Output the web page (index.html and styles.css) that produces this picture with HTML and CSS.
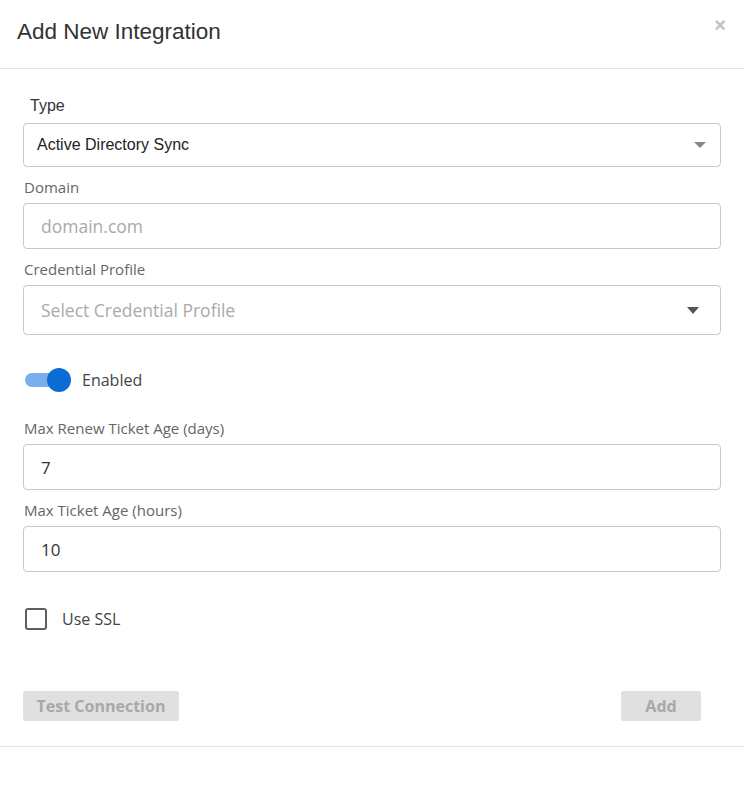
FILE: index.html
```html
<!DOCTYPE html>
<html>
<head>
<meta charset="utf-8">
<link rel="stylesheet" href="styles.css">
</head>
<body>
<div class="modal">
  <div class="modal-header">
    <h1 class="title">Add New Integration</h1>
    <span class="close">&times;</span>
  </div>
  <div class="modal-body">
    <div class="type-label">Type</div>
    <div class="select select-type">
      <span class="select-value">Active Directory Sync</span>
      <span class="caret caret-light"></span>
    </div>
    <div class="label">Domain</div>
    <div class="input input-domain"><span class="placeholder">domain.com</span></div>
    <div class="label">Credential Profile</div>
    <div class="select select-cred">
      <span class="placeholder">Select Credential Profile</span>
      <span class="caret caret-dark"></span>
    </div>
    <div class="toggle-row">
      <span class="toggle"><span class="track"></span><span class="knob"></span></span>
      <span class="toggle-label">Enabled</span>
    </div>
    <div class="label">Max Renew Ticket Age (days)</div>
    <div class="input"><span class="value">7</span></div>
    <div class="label">Max Ticket Age (hours)</div>
    <div class="input"><span class="value">10</span></div>
    <div class="check-row">
      <span class="checkbox"></span>
      <span class="check-label">Use SSL</span>
    </div>
    <div class="actions">
      <button class="btn btn-test">Test Connection</button>
      <button class="btn btn-add">Add</button>
    </div>
  </div>
</div>
</body>
</html>
```
FILE: styles.css
```css
* { box-sizing: border-box; }
html, body { margin: 0; padding: 0; background: #fff; }
body { font-family: "Open Sans", "Liberation Sans", sans-serif; color: #444; }
.modal { width: 744px; border-bottom: 1px solid #e5e5e5; }
.modal-header {
  height: 69px;
  border-bottom: 1px solid #e5e5e5;
  display: flex;
  align-items: flex-start;
  justify-content: space-between;
  padding: 0 18px 0 17px;
}
.title {
  margin: 18px 0 0 0;
  font-family: "Liberation Sans", Arial, sans-serif;
  font-weight: normal;
  font-size: 22.5px;
  line-height: 28px;
  color: #333;
}
.close {
  font-family: "Liberation Sans", Arial, sans-serif;
  font-size: 20px;
  line-height: 20px;
  margin-top: 15px;
  color: #c0c0c0;
  font-weight: bold;
}
.modal-body { padding: 27px 23px 25px 23px; }
.type-label {
  font-family: "Liberation Sans", Arial, sans-serif;
  font-size: 16px;
  line-height: 20px;
  color: #333;
  padding-left: 7px;
  margin-bottom: 7px;
}
.select, .input {
  width: 698px;
  border: 1px solid #c8c8c8;
  border-radius: 4px;
  display: flex;
  align-items: center;
  justify-content: space-between;
  background: #fff;
}
.select-type { height: 44px; padding: 0 14px 0 13px; }
.select-value {
  font-family: "Liberation Sans", Arial, sans-serif;
  font-size: 16px;
  color: #222;
}
.caret {
  width: 0; height: 0;
  border-left: 6px solid transparent;
  border-right: 6px solid transparent;
}
.caret-light { border-top: 6px solid #888; }
.caret-dark { border-top: 7px solid #555; margin-right: 7px; }
.label {
  font-size: 15px;
  line-height: 20px;
  color: #666;
  margin: 10px 0 6px 1px;
}
.input { height: 46px; padding: 0 17px; }
.placeholder { font-size: 17.5px; color: #aaa; }
.select-cred { height: 50px; padding: 0 14px 0 17px; }
.value { font-size: 17px; color: #333; }
.toggle-row {
  display: flex;
  align-items: center;
  margin: 33px 0 26px 2px;
  height: 24px;
}
.toggle { position: relative; width: 46px; height: 24px; display: inline-block; }
.track {
  position: absolute; left: 0; top: 5px;
  width: 38px; height: 14px; border-radius: 7px;
  background: #79afea;
}
.knob {
  position: absolute; left: 22px; top: 0;
  width: 24px; height: 24px; border-radius: 50%;
  background: #0a6dd6;
}
.toggle-label { font-size: 16px; color: #444; margin-left: 11px; }
.check-row {
  display: flex;
  align-items: center;
  margin: 36px 0 0 2px;
  height: 22px;
}
.checkbox {
  width: 22px; height: 22px;
  border: 2px solid #5c6066;
  border-radius: 3px;
}
.check-label { font-size: 16px; color: #444; margin-left: 15px; }
.actions {
  display: flex;
  justify-content: space-between;
  margin-top: 61px;
  padding-right: 20px;
}
.btn {
  font-family: "Open Sans", sans-serif;
  font-weight: bold;
  font-size: 16px;
  color: #a8a8a8;
  background: #e0e0e0;
  border: none;
  border-radius: 2px;
  height: 30px;
  padding: 0;
}
.btn-test { width: 156px; }
.btn-add { width: 80px; }
```
